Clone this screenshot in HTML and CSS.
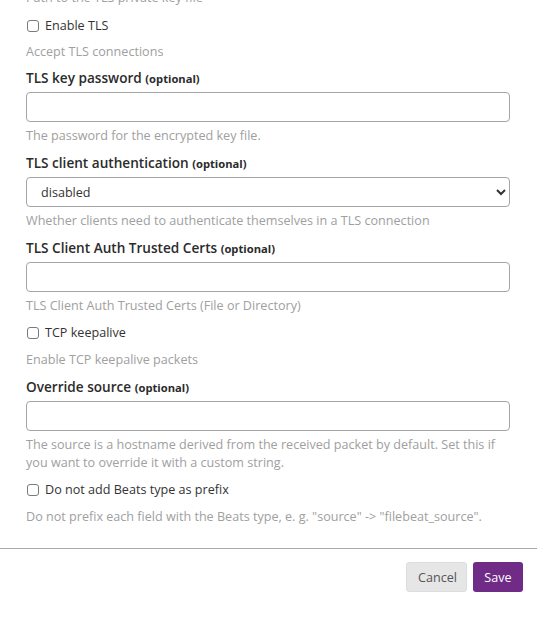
FILE: index.html
```html
<!DOCTYPE html>
<html>
<head>
<meta charset="utf-8">
<link rel="stylesheet" href="styles.css">
</head>
<body>
<div class="modal">
  <div class="body">
    <p class="help top-help">Path to the TLS private key file</p>

    <div class="group check-group first">
      <label class="check"><input type="checkbox"><span>Enable TLS</span></label>
      <p class="help">Accept TLS connections</p>
    </div>

    <div class="group">
      <label class="label">TLS key password <small>(optional)</small></label>
      <input class="control" type="password">
      <p class="help">The password for the encrypted key file.</p>
    </div>

    <div class="group">
      <label class="label">TLS client authentication <small>(optional)</small></label>
      <select class="control select"><option>disabled</option></select>
      <p class="help">Whether clients need to authenticate themselves in a TLS connection</p>
    </div>

    <div class="group">
      <label class="label">TLS Client Auth Trusted Certs <small>(optional)</small></label>
      <input class="control" type="text">
      <p class="help">TLS Client Auth Trusted Certs (File or Directory)</p>
    </div>

    <div class="group check-group">
      <label class="check"><input type="checkbox"><span>TCP keepalive</span></label>
      <p class="help">Enable TCP keepalive packets</p>
    </div>

    <div class="group">
      <label class="label">Override source <small>(optional)</small></label>
      <input class="control" type="text">
      <p class="help">The source is a hostname derived from the received packet by default. Set this if you want to override it with a custom string.</p>
    </div>

    <div class="group check-group">
      <label class="check"><input type="checkbox"><span>Do not add Beats type as prefix</span></label>
      <p class="help">Do not prefix each field with the Beats type, e. g. "source" -&gt; "filebeat_source".</p>
    </div>
  </div>
  <div class="footer">
    <button class="btn btn-cancel" type="button">Cancel</button>
    <button class="btn btn-save" type="button">Save</button>
  </div>
</div>
</body>
</html>
```

FILE: styles.css
```css
html, body {
  margin: 0;
  padding: 0;
  background: #fff;
}

body {
  font-family: "Open Sans", "Noto Sans", sans-serif;
  font-size: 12.6px;
  line-height: 18px;
  color: #333;
  overflow: hidden;
}

.modal {
  width: 537px;
}

.body {
  padding: 0 27px 0 26px;
  margin-top: -11px;
}

.help {
  margin: 0;
  color: #a0a0a0;
  font-size: 12.6px;
  line-height: 18px;
}

.top-help {
  margin-bottom: 10px;
}

.group {
  display: flex;
  flex-direction: column;
  margin-bottom: 9px;
}

.group.first {
  margin-bottom: 8px;
}

.group .label {
  display: block;
  height: 18px;
  font-weight: 600;
  font-size: 13.6px;
  line-height: 18px;
  color: #2b2b2b;
  margin-bottom: 5px;
}

.group .label small {
  font-size: 11.2px;
  font-weight: 700;
  line-height: 1;
}

.control {
  box-sizing: border-box;
  height: 30px;
  width: 100%;
  border: 1px solid #a5a5a5;
  border-radius: 4px;
  background: #fff;
  font-family: inherit;
  font-size: 12.6px;
  color: #333;
  padding: 0 12px;
  margin: 0 0 5px 0;
}

.select {
  padding-left: 10px;
}

.check-group .check {
  display: flex;
  align-items: center;
  gap: 6px;
  height: 18px;
  margin-bottom: 9px;
  color: #333;
}

.check-group.first .check {
  margin-bottom: 8px;
}

.check input {
  appearance: none;
  -webkit-appearance: none;
  box-sizing: border-box;
  width: 12px;
  height: 12px;
  margin: 0 0 0 1px;
  border: 1px solid #7a7a7a;
  border-radius: 3px;
  background: #fff;
}

.footer {
  margin-top: 22px;
  border-top: 1px solid #aaa;
  display: flex;
  justify-content: flex-end;
  gap: 6px;
  padding: 13px 14px 0 0;
}

.btn {
  font-family: inherit;
  font-size: 12.6px;
  height: 30px;
  border: 0;
  border-radius: 3px;
  padding: 0 11px;
}

.btn-cancel {
  background: #e6e6e6;
  color: #555;
  width: 61px;
  border: 1px solid #ddd;
}

.btn-save {
  background: #702b86;
  color: #fff;
  width: 50px;
}
```
